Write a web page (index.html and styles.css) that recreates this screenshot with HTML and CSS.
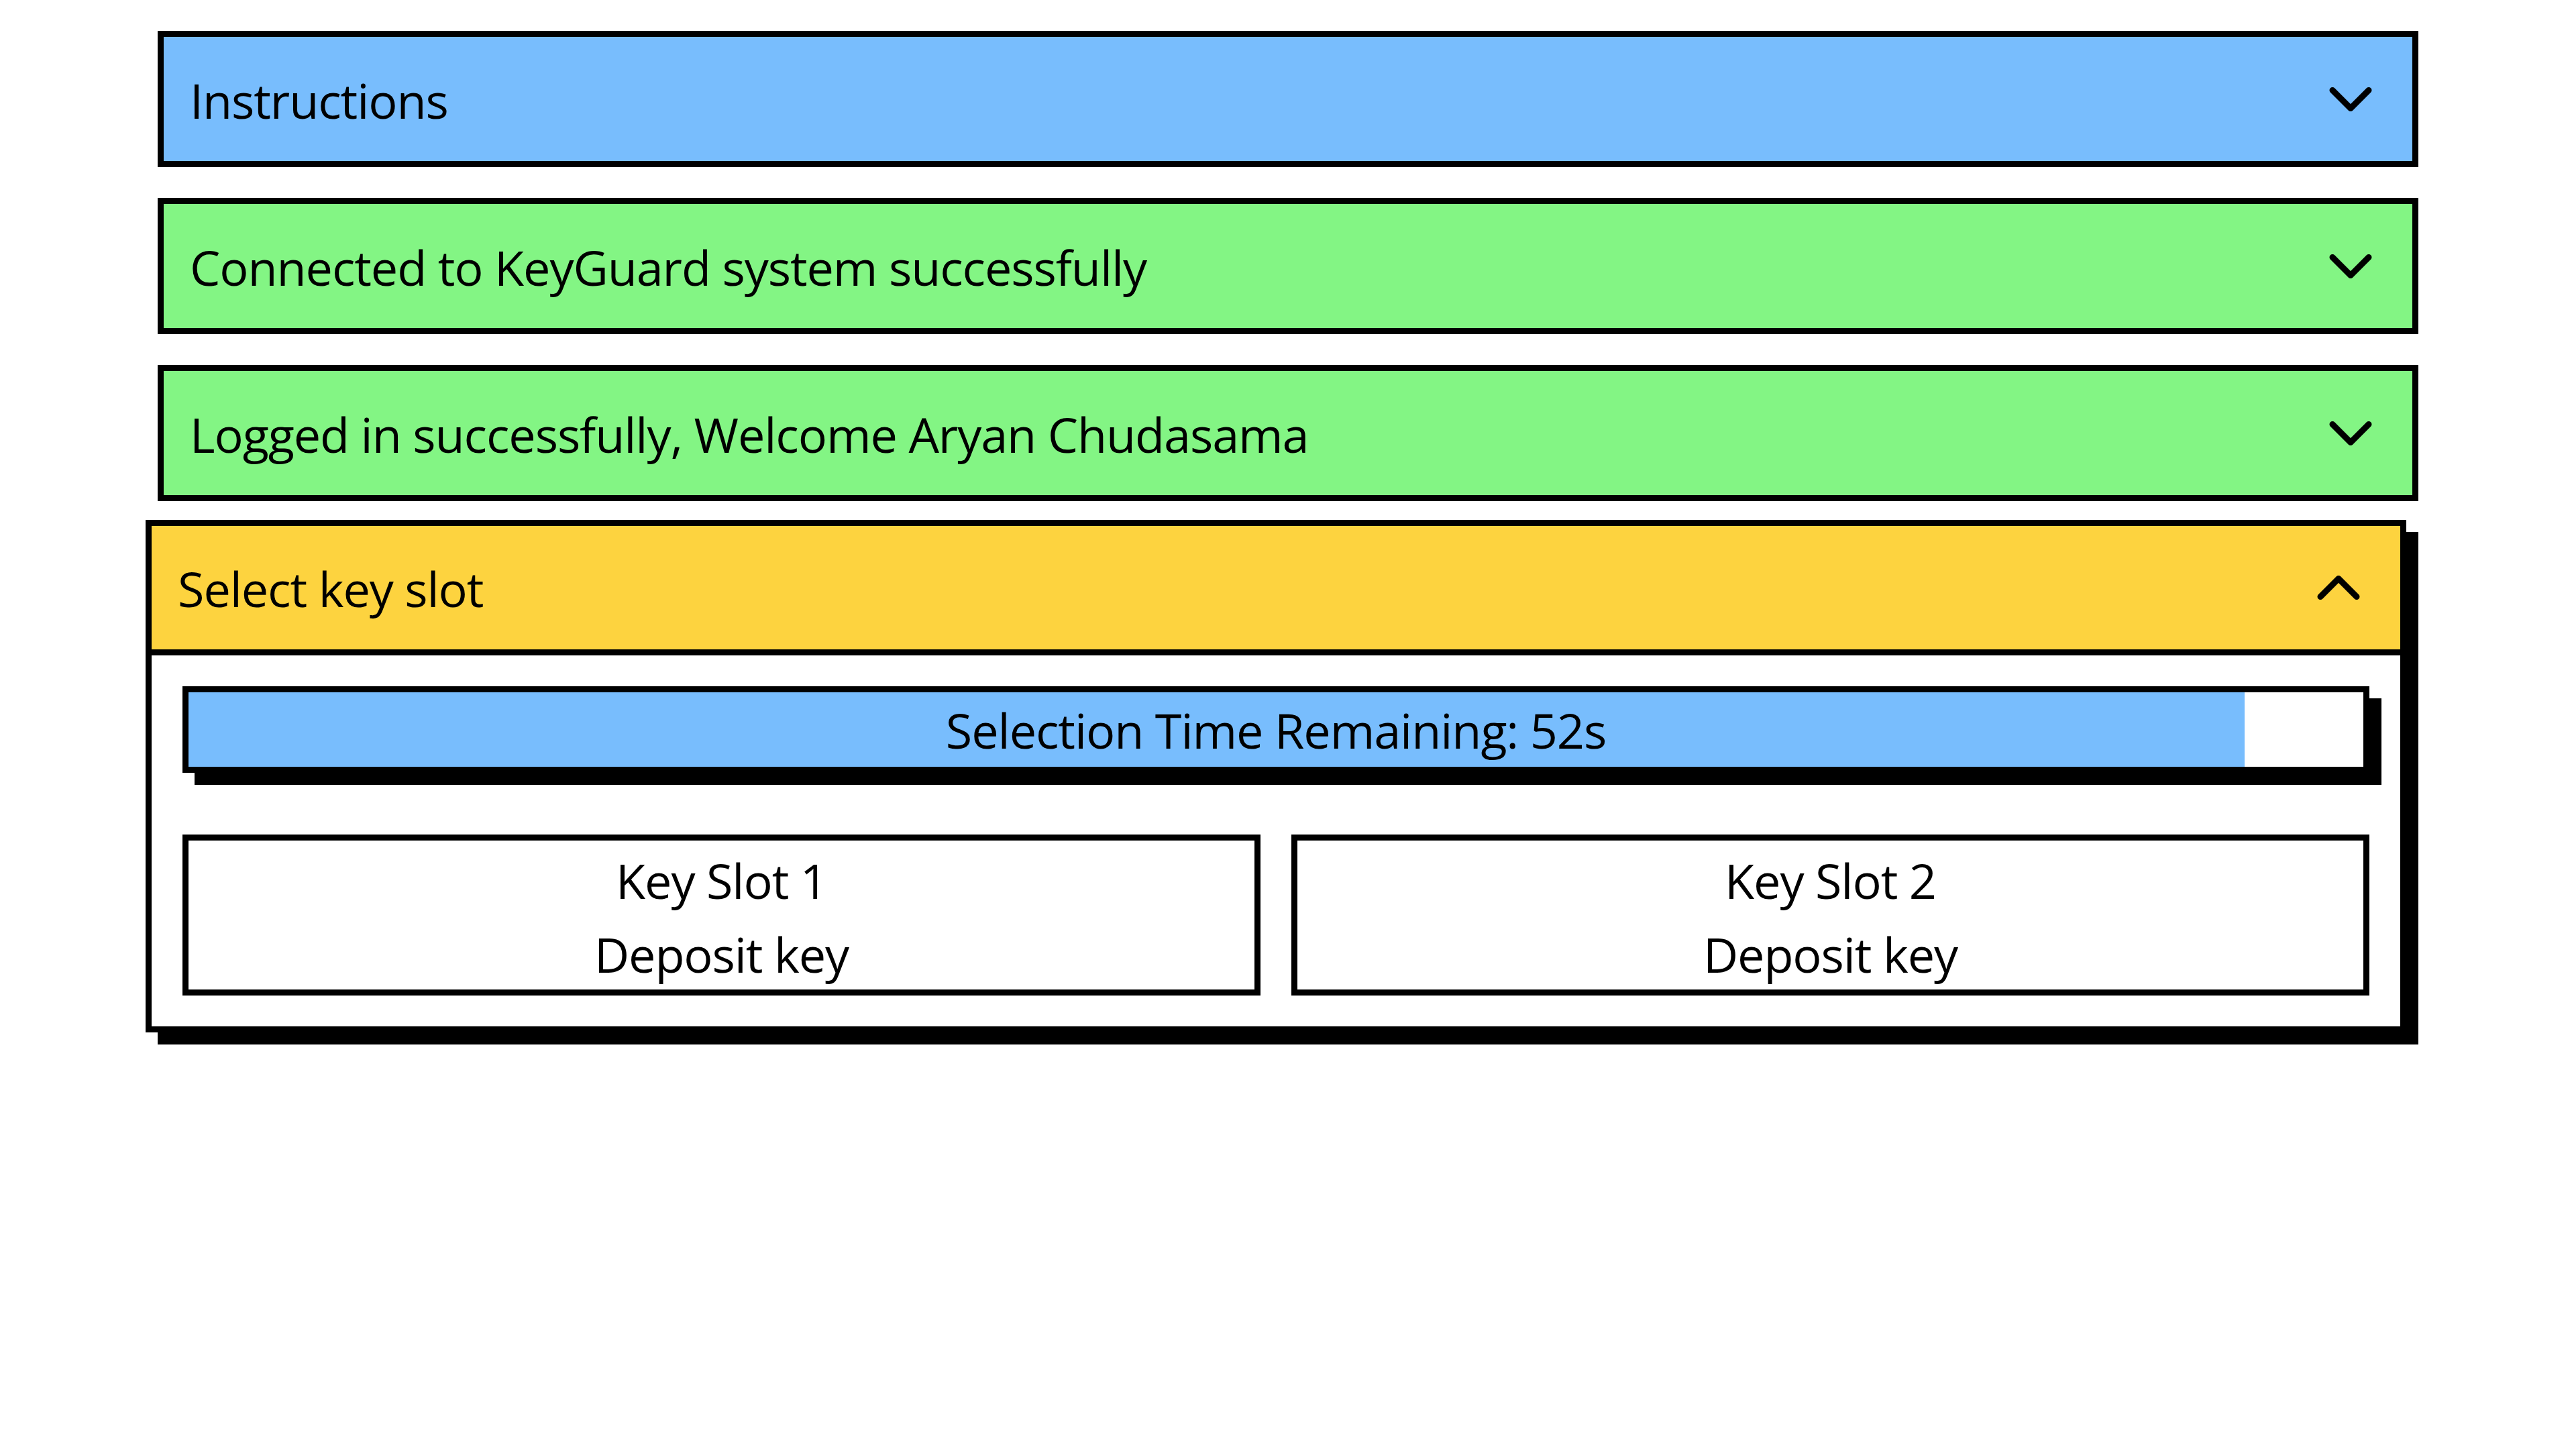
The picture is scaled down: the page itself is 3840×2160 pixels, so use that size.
FILE: index.html
```html
<!DOCTYPE html>
<html lang="en">
<head>
<meta charset="utf-8">
<title>KeyGuard</title>
<link rel="stylesheet" href="styles.css">
</head>
<body>
<main class="stack">
  <section class="acc acc-blue">
    <div class="acc-head">
      <span class="acc-title">Instructions</span>
      <svg class="chev" viewBox="0 0 24 24"><path d="m6 9 6 6 6-6"/></svg>
    </div>
  </section>
  <section class="acc acc-green">
    <div class="acc-head">
      <span class="acc-title">Connected to KeyGuard system successfully</span>
      <svg class="chev" viewBox="0 0 24 24"><path d="m6 9 6 6 6-6"/></svg>
    </div>
  </section>
  <section class="acc acc-green">
    <div class="acc-head">
      <span class="acc-title">Logged in successfully, Welcome Aryan Chudasama</span>
      <svg class="chev" viewBox="0 0 24 24"><path d="m6 9 6 6 6-6"/></svg>
    </div>
  </section>
  <section class="acc acc-open">
    <div class="acc-head acc-head-yellow">
      <span class="acc-title">Select key slot</span>
      <svg class="chev" viewBox="0 0 24 24"><path d="m18 15-6-6-6 6"/></svg>
    </div>
    <div class="acc-body">
      <div class="timer">
        <div class="timer-fill" style="width: 94.55%"></div>
        <div class="timer-label">Selection Time Remaining: 52s</div>
      </div>
      <div class="slots">
        <button class="slot"><span>Key Slot 1</span><span>Deposit key</span></button>
        <button class="slot"><span>Key Slot 2</span><span>Deposit key</span></button>
      </div>
    </div>
  </section>
</main>
</body>
</html>
```

FILE: styles.css
```css
html, body {
  margin: 0;
  padding: 0;
  background: #ffffff;
}

body {
  font-family: "Open Sans", "Noto Sans", sans-serif;
  color: #000000;
  letter-spacing: -1.1px;
}

.stack {
  display: flex;
  flex-direction: column;
  gap: 46px;
  padding: 46px 235px 0;
}

.acc {
  border: 9px solid #000000;
}

.acc-blue { background: #78bdfd; }
.acc-green { background: #83f584; }

.acc-open {
  background: #ffffff;
  transform: translate(-18px, -18px);
  box-shadow: 18px 18px 0 #000000;
}

.acc-head {
  display: flex;
  align-items: center;
  justify-content: space-between;
  height: 185px;
  box-sizing: border-box;
  padding: 0 38px 0 39px;
  font-size: 72px;
}

.acc-head-yellow {
  background: #fdd33f;
  border-bottom: 9px solid #000000;
  height: 193px;
}

.acc-title {
  line-height: 1.36;
  padding-top: 4px;
}

.chev {
  width: 108px;
  height: 108px;
  fill: none;
  stroke: #000000;
  stroke-width: 2;
  stroke-linecap: round;
  stroke-linejoin: round;
}

.acc-body {
  display: flex;
  flex-direction: column;
  gap: 92px;
  padding: 46px;
}

.timer {
  display: grid;
  height: 111px;
  border: 9px solid #000000;
  background: #ffffff;
  box-shadow: 18px 18px 0 #000000;
}

.timer-fill,
.timer-label {
  grid-area: 1 / 1;
}

.timer-fill {
  background: #78bdfd;
}

.timer-label {
  display: flex;
  align-items: center;
  justify-content: center;
  font-size: 72px;
}

.slots {
  display: grid;
  grid-template-columns: 1fr 1fr;
  gap: 46px;
}

.slot {
  display: flex;
  flex-direction: column;
  align-items: center;
  justify-content: center;
  height: 240px;
  margin: 0;
  padding: 6px 0 0;
  border: 9px solid #000000;
  background: #ffffff;
  color: #000000;
  font-family: "Open Sans", "Noto Sans", sans-serif;
  font-size: 72px;
  letter-spacing: -1.1px;
  line-height: 110px;
}
```
